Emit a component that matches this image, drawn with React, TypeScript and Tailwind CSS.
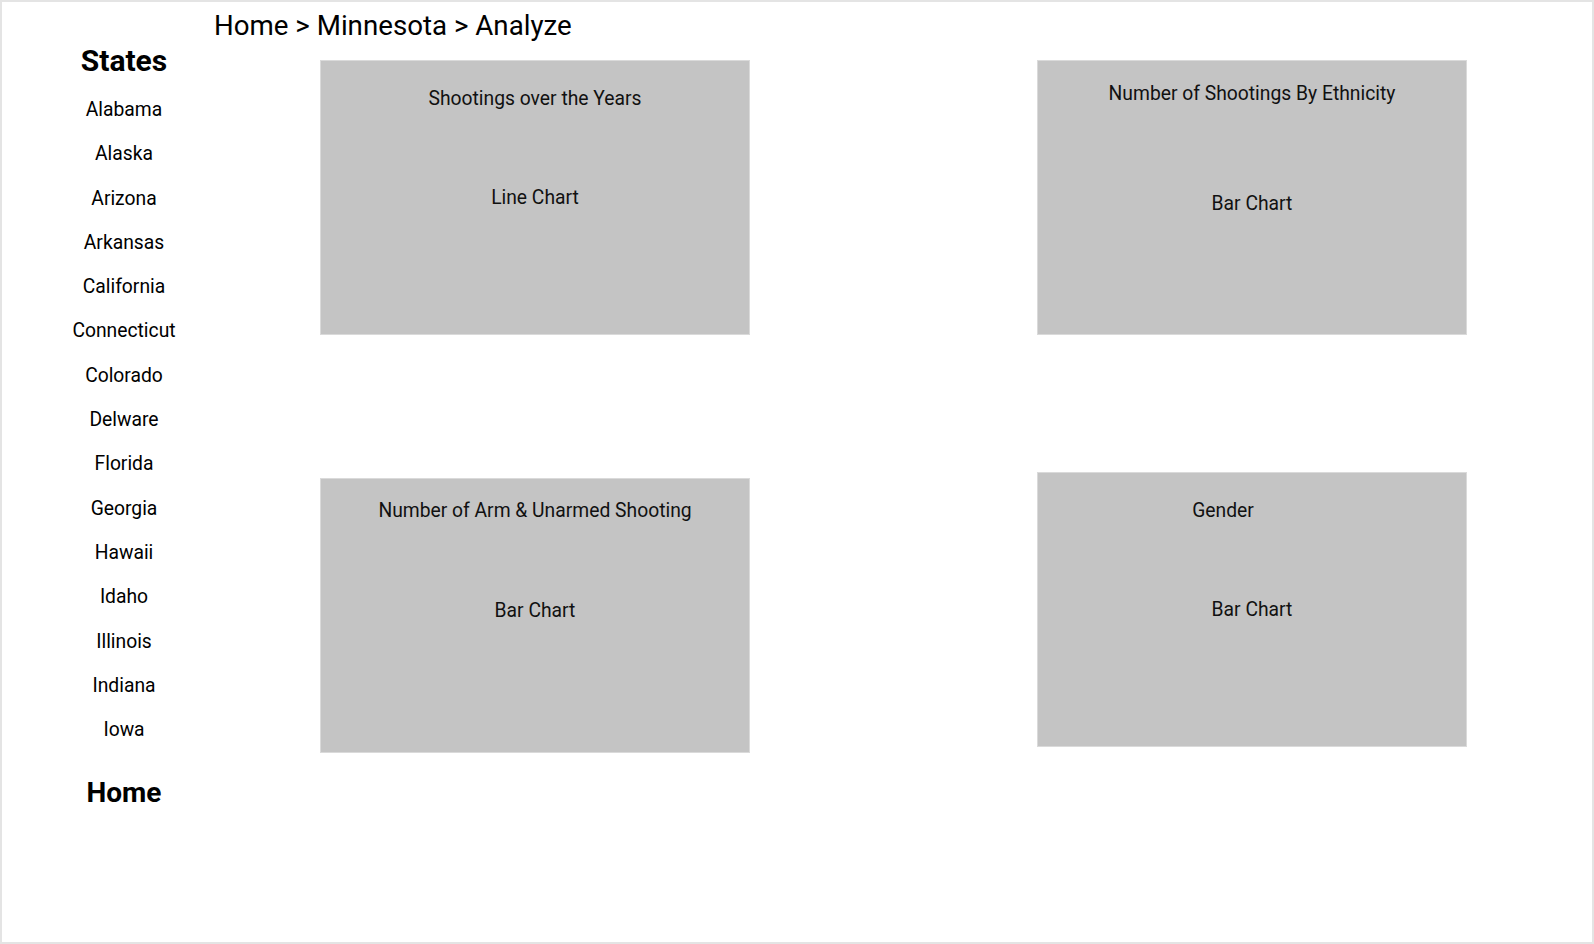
import React from "react";

const states = [
  "Alabama",
  "Alaska",
  "Arizona",
  "Arkansas",
  "California",
  "Connecticut",
  "Colorado",
  "Delware",
  "Florida",
  "Georgia",
  "Hawaii",
  "Idaho",
  "Illinois",
  "Indiana",
  "Iowa",
];

function Card({
  title,
  label,
  titleTop,
  labelGap,
  titleShift,
  extraTop,
}: {
  title: string;
  label: string;
  titleTop: string;
  labelGap: string;
  titleShift?: string;
  extraTop?: string;
}) {
  return (
    <div
      className={`flex h-[275px] w-[430px] flex-col items-center border border-[#dadada] bg-[#c4c4c4] text-[19.3px] leading-[24px] text-[#111] ${extraTop ?? ""}`}
    >
      <div className={`${titleTop} ${titleShift ?? ""}`}>{title}</div>
      <div className={labelGap}>{label}</div>
    </div>
  );
}

export default function App() {
  return (
    <div
      className="box-border h-[944px] w-[1594px] overflow-hidden border-2 border-[#e4e4e4] bg-white text-black"
      style={{ fontFamily: "Roboto, 'Liberation Sans', sans-serif" }}
    >
      <div className="flex h-[47px] items-center pl-[212px] text-[27.7px] leading-[34px]">
        Home &gt; Minnesota &gt; Analyze
      </div>
      <div className="flex">
        <aside className="flex w-[244px] flex-col items-center">
          <div className="text-[30px] font-bold leading-[24px]">States</div>
          <ul className="mt-[15px] flex flex-col items-center">
            {states.map((s) => (
              <li key={s} className="text-[19.3px] leading-[44.3px]">
                {s}
              </li>
            ))}
          </ul>
          <div className="mt-[27px] text-[28px] font-bold leading-[28px]">Home</div>
        </aside>
        <main className="flex gap-[287px] pl-[74px] pt-[11px]">
          <div className="flex flex-col">
            <Card
              title="Shootings over the Years"
              label="Line Chart"
              titleTop="mt-[26px]"
              labelGap="mt-[75px]"
            />
            <Card
              title="Number of Arm & Unarmed Shooting"
              label="Bar Chart"
              titleTop="mt-[20px]"
              labelGap="mt-[76px]"
              extraTop="mt-[143px]"
            />
          </div>
          <div className="flex flex-col">
            <Card
              title="Number of Shootings By Ethnicity"
              label="Bar Chart"
              titleTop="mt-[21px]"
              labelGap="mt-[86px]"
            />
            <Card
              title="Gender"
              label="Bar Chart"
              titleTop="mt-[26px]"
              labelGap="mt-[75px]"
              titleShift="-translate-x-[29px]"
              extraTop="mt-[137px]"
            />
          </div>
        </main>
      </div>
    </div>
  );
}
